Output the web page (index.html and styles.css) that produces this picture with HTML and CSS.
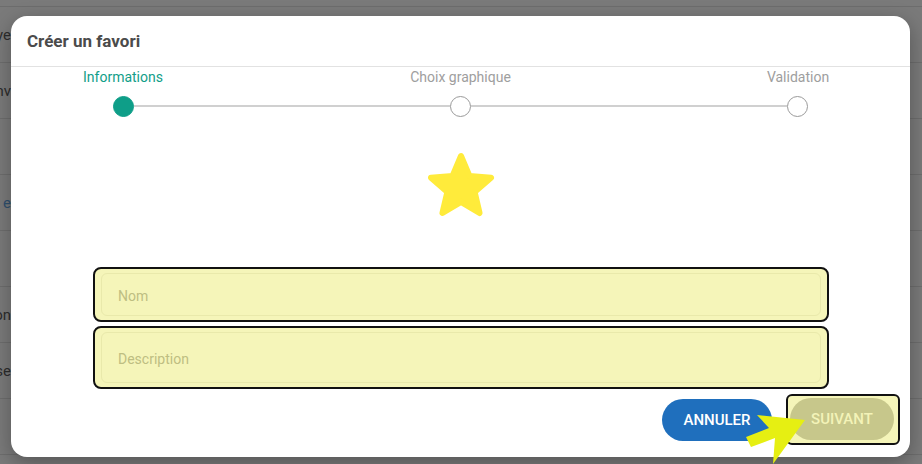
FILE: index.html
```html
<!DOCTYPE html>
<html lang="fr">
<head>
<meta charset="utf-8">
<title>Créer un favori</title>
<link rel="stylesheet" href="styles.css">
</head>
<body>
<div class="page">
  <div class="page-top"></div>
  <div class="row"><span class="cell">Envoye</span></div>
  <div class="row"><span class="cell">Conv</span></div>
  <div class="row"><span class="cell"></span></div>
  <div class="row"><span class="cell link">e</span></div>
  <div class="row"><span class="cell"></span></div>
  <div class="row"><span class="cell">Action</span></div>
  <div class="row"><span class="cell">Base</span></div>
  <div class="row"><span class="cell"></span></div>
</div>

<div class="dialog">
  <div class="dialog-header">Créer un favori</div>
  <div class="stepper">
    <div class="labels">
      <span class="label active">Informations</span>
      <span class="label">Choix graphique</span>
      <span class="label">Validation</span>
    </div>
    <div class="track">
      <span class="dot filled"></span>
      <span class="line"></span>
      <span class="dot"></span>
      <span class="line"></span>
      <span class="dot"></span>
    </div>
  </div>
  <div class="star-wrap">
    <svg class="star" viewBox="0 0 24 24" width="72" height="72"><path d="M12 17.27L18.18 21l-1.64-7.03L22 9.24l-7.19-.61L12 2 9.19 8.63 2 9.24l5.46 4.73L5.82 21z" fill="#ffeb3b" stroke="#ffeb3b" stroke-width="2" stroke-linejoin="round"/></svg>
  </div>
  <div class="fields">
    <div class="hl"><div class="field">Nom</div></div>
    <div class="hl"><div class="field tall">Description</div></div>
  </div>
  <div class="actions">
    <button class="btn cancel">ANNULER</button>
    <div class="hl-btn"><button class="btn next">SUIVANT</button></div>
  </div>
</div>

<svg class="arrow" width="922" height="464" viewBox="0 0 922 464"><polygon points="805,420 757,415 769,428 746,437 751,447 775,438 773,464" fill="#e6ef12"/></svg>
</body>
</html>
```

FILE: styles.css
```css
* { box-sizing: border-box; }
html, body { margin: 0; padding: 0; }
body {
  width: 922px;
  height: 464px;
  overflow: hidden;
  background: #7a7a7a;
  font-family: Roboto, "Liberation Sans", sans-serif;
  position: relative;
}
.page-top {
  height: 7px;
  border-bottom: 1px solid #6d6d6d;
}
.row {
  height: 56px;
  border-bottom: 1px solid #6d6d6d;
  display: flex;
  align-items: center;
}
.cell {
  width: 11px;
  overflow: hidden;
  display: flex;
  justify-content: flex-end;
  white-space: nowrap;
  font-size: 15px;
  color: #2c2c2c;
}
.cell.link { color: #2f4f6e; }

.dialog {
  position: absolute;
  left: 11px;
  top: 16px;
  width: 899px;
  height: 441px;
  background: #fff;
  border-radius: 16px;
  box-shadow: 0 6px 20px rgba(0,0,0,0.3);
  display: flex;
  flex-direction: column;
}
.dialog-header {
  height: 51px;
  padding: 0 16px;
  display: flex;
  align-items: center;
  font-size: 17px;
  font-weight: 700;
  color: #4b4b4b;
  border-bottom: 1px solid #e2e2e2;
}
.stepper {
  padding-top: 1px;
}
.labels {
  display: flex;
  justify-content: space-between;
  padding: 0 32px;
}
.label {
  width: 160px;
  text-align: center;
  font-size: 14px;
  line-height: 18px;
  color: #9e9e9e;
}
.label.active { color: #119e89; }
.track {
  display: flex;
  align-items: center;
  padding: 0 102px;
  margin-top: 9px;
  height: 22px;
}
.dot {
  width: 21px;
  height: 21px;
  border-radius: 50%;
  border: 1px solid #9a9a9a;
  background: #fff;
  flex: none;
}
.dot.filled {
  background: #0e9e88;
  border-color: #0e9e88;
}
.line {
  flex: 1;
  height: 2px;
  background: #d0d0d0;
}
.star-wrap {
  display: flex;
  justify-content: center;
  margin-top: 33px;
  padding-left: 1px;
}
.fields {
  margin-top: 45px;
  padding: 0 81px 0 82px;
  display: flex;
  flex-direction: column;
  gap: 4px;
}
.hl {
  background: #f5f5b9;
  border: 2px solid #111;
  border-radius: 8px;
  padding: 4px 6px;
}
.field {
  height: 43px;
  border: 1px solid #e9e9ab;
  border-radius: 6px;
  display: flex;
  align-items: center;
  padding-left: 16px;
  padding-top: 2px;
  font-size: 14px;
  color: #bebe82;
}
.field.tall { height: 51px; }
.actions {
  display: flex;
  justify-content: flex-end;
  align-items: center;
  gap: 14px;
  padding-right: 10px;
  margin-top: 5px;
}
.btn {
  border: none;
  border-radius: 21px;
  height: 42px;
  font-family: Roboto, "Liberation Sans", sans-serif;
  font-size: 15px;
  font-weight: 500;
  padding: 0;
}
.cancel {
  width: 110px;
  background: #1f6fbd;
  color: #fff;
}
.hl-btn {
  background: #f5f5b9;
  border: 2px solid #111;
  border-radius: 6px;
  padding: 2px 4px 3px 2px;
}
.next {
  width: 104px;
  background: #c7c78b;
  color: #f3f3b8;
  display: block;
}
.arrow {
  position: absolute;
  left: 0;
  top: 0;
  pointer-events: none;
}
```
